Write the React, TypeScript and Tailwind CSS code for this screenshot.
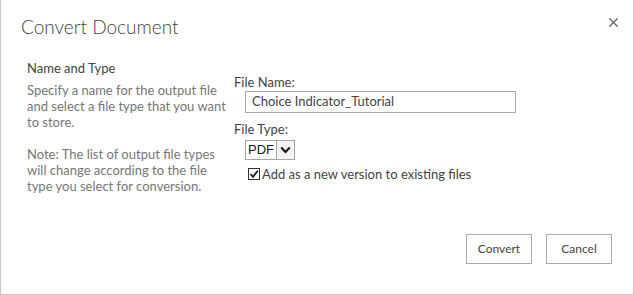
import { X } from "lucide-react";

const font = "font-['Lato','Open_Sans',sans-serif]";

function CheckBox() {
  return (
    <span className="flex h-[12px] w-[12px] items-center justify-center border border-[#333] bg-white">
      <svg width="10" height="10" viewBox="0 0 10 10">
        <path d="M1.5 5.2 L4 7.8 L8.8 1.8" fill="none" stroke="#222" strokeWidth="1.8" />
      </svg>
    </span>
  );
}

function FakeSelect() {
  return (
    <div className="flex h-[20px] w-[50px] items-stretch border border-[#a6a6a6] bg-white">
      <span className="flex flex-1 items-center pl-[2px] font-['Liberation_Sans',Arial,sans-serif] text-[13px] text-[#222]">
        PDF
      </span>
      <span className="flex w-[18px] items-center justify-center border-l border-[#a6a6a6] bg-[#f4f4f4]">
        <svg width="11" height="8" viewBox="0 0 11 8">
          <path d="M1.2 1.5 L5.5 6 L9.8 1.5" fill="none" stroke="#111" strokeWidth="2" />
        </svg>
      </span>
    </div>
  );
}

export default function App() {
  return (
    <div className={`${font} flex h-[295px] w-[634px] flex-col border-x border-b border-[#c6c6c6] bg-white`}>
      <header className="flex items-start justify-between pl-[20px] pr-[11px] pt-[13px]">
        <h1 className="text-[19px] font-light leading-[28px] text-[#444]">Convert Document</h1>
        <button className="mt-[1px] p-[1px] text-[#666]">
          <X size={15} strokeWidth={2.2} />
        </button>
      </header>

      <div className="mt-[18px] flex flex-1">
        <section className="w-[233px] pl-[26px] text-[13px] leading-[16px]">
          <h2 className="leading-[18px] text-[#444]">Name and Type</h2>
          <p className="mt-[5px] text-[#777]">
            Specify a name for the output file
            <br />
            and select a file type that you want
            <br />
            to store.
          </p>
          <p className="mt-[16px] text-[#777]">
            Note: The list of output file types
            <br />
            will change according to the file
            <br />
            type you select for conversion.
          </p>
        </section>

        <section className="pt-[14px] text-[13px]">
          <label className="block leading-[18px] text-[#444]">File Name:</label>
          <div className="ml-[11px] mt-[0px] flex h-[22px] w-[271px] items-center border border-[#ababab] px-[6px] text-[#444]">
            Choice Indicator_Tutorial
          </div>
          <label className="mt-[7px] block leading-[18px] text-[#444]">File Type:</label>
          <div className="ml-[11px] mt-[2px]">
            <FakeSelect />
          </div>
          <div className="ml-[14px] mt-[6px] flex items-center gap-[2px] leading-[16px] text-[#444]">
            <CheckBox />
            <span>Add as a new version to existing files</span>
          </div>
        </section>
      </div>

      <footer className="flex justify-end gap-[14px] pb-[30px] pr-[21px]">
        <button className="h-[30px] w-[66px] border border-[#ababab] bg-white text-[12px] text-[#444]">Convert</button>
        <button className="h-[30px] w-[66px] border border-[#ababab] bg-white text-[12px] text-[#444]">Cancel</button>
      </footer>
    </div>
  );
}
